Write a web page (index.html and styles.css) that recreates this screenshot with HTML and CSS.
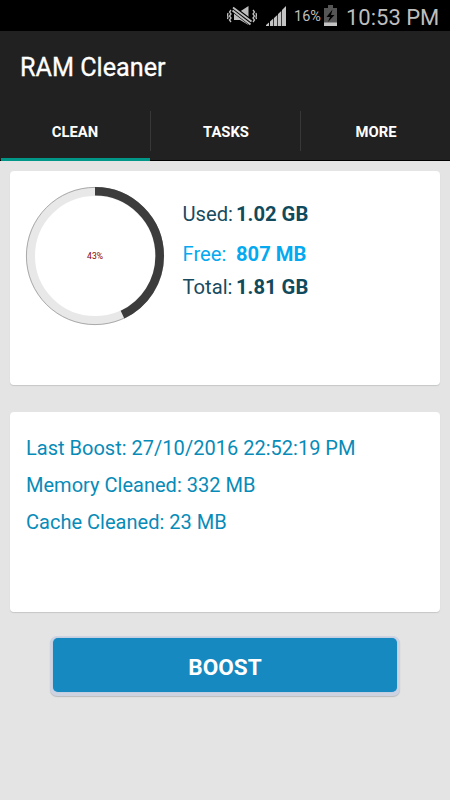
FILE: index.html
```html
<!DOCTYPE html>
<html lang="en">
<head>
<meta charset="utf-8">
<title>RAM Cleaner</title>
<link rel="stylesheet" href="styles.css">
</head>
<body>
<header class="status">
  <svg class="mute" width="30" height="22" viewBox="0 0 30 22">
    <path d="M7 5.500h6L21.500 0v19L13 14H7z" fill="#bebebe"/>
    <path d="M5.500 2.500L24.500 17" stroke="#000" stroke-width="6.500"/>
    <path d="M6 1.500L24.500 15.500M5.500 4.500L23.500 18.500" stroke="#bebebe" stroke-width="1.800"/>
    <path d="M4 4L2.500 6L4 8L2.500 10L4 12L2.500 14L4 16M1 7L0.500 9L1 11L0.500 13M26 4L27.500 6L26 8L27.500 10L26 12L27.500 14L26 16M29 7L29.500 9L29 11L29.500 13" fill="none" stroke="#bebebe" stroke-width="1.300"/>
  </svg>
  <svg class="signal" width="21" height="21" viewBox="0 0 21 21">
    <path d="M0 20v-1l3-2.500V20zM4 20v-4.500l3.300-3V20zM8 20v-8l3.300-3v11zM12 20V8l3.300-3v15zM16 20V4l4-4v20z" fill="#c4c4c4"/>
  </svg>
  <span class="percent">16%</span>
  <svg class="battery" width="13" height="22" viewBox="0 0 13 22">
    <path d="M4 0h5v3h4v18H0V3h4z" fill="#555"/>
    <path d="M0 17.500h13V21H0z" fill="#c4c4c4"/>
    <path d="M8.500 4.500L2.500 12h3.500L4 17l6.500-7H7z" fill="#000"/>
  </svg>
  <span class="time">10:53 PM</span>
</header>
<div class="appbar">
  <h1>RAM Cleaner</h1>
  <nav class="tabs">
    <a class="tab active">CLEAN</a>
    <a class="tab">TASKS</a>
    <a class="tab">MORE</a>
  </nav>
</div>
<main>
  <section class="card memory">
    <svg class="ring" width="140" height="140" viewBox="0 0 140 140">
      <circle cx="70" cy="70" r="64.500" fill="none" stroke="#e8e8e8" stroke-width="9"/>
      <circle cx="70" cy="70" r="68.600" fill="none" stroke="#999" stroke-width=".8"/>
      <circle cx="70" cy="70" r="64.700" fill="none" stroke="#3c3c3c" stroke-width="8.600" pathLength="100" stroke-dasharray="43 57" transform="rotate(-90 70 70)"/>
      <text x="70" y="73" text-anchor="middle">43%</text>
    </svg>
    <dl class="stats">
      <dt>Used:</dt><dd>1.02 GB</dd>
      <dt class="free">Free:</dt><dd class="free">807 MB</dd>
      <dt class="total">Total:</dt><dd class="total">1.81 GB</dd>
    </dl>
  </section>
  <section class="card history">
    <p>Last Boost: 27/10/2016 22:52:19 PM</p>
    <p>Memory Cleaned: 332 MB</p>
    <p>Cache Cleaned: 23 MB</p>
  </section>
  <button class="boost"><span>BOOST</span></button>
</main>
</body>
</html>
```
FILE: styles.css
```css
* { box-sizing: border-box; }
body {
  margin: 0;
  height: 800px;
  overflow: hidden;
  background: #e4e4e4;
  font-family: Roboto, "Liberation Sans", sans-serif;
}
.status {
  display: flex;
  height: 31px;
  padding-right: 11px;
  justify-content: flex-end;
  background: #000;
  color: #bebebe;
  white-space: nowrap;
}
.mute { margin: 6px 9px 0 0; }
.signal { margin: 6px 7px 0 0; }
.percent { width: 27px; margin-right: 3px; font-size: 14.5px; line-height: 34px; }
.battery { margin: 5px 9px 0 0; }
.time { width: 93px; font-size: 22px; line-height: 35px; }
.appbar { height: 130px; background: #212121; border-bottom: 1px solid #000; color: #fff; }
h1 { margin: 0; height: 72px; padding-left: 20px; font-size: 25.2px; font-weight: 400; line-height: 74px; -webkit-text-stroke: .3px #fff; }
.tabs { display: grid; grid-template-columns: repeat(3, 1fr); height: 58px; }
.tab {
  display: flex;
  height: 58px;
  padding-left: 2px;
  align-items: center;
  justify-content: center;
  font-size: 14.8px;
  font-weight: 700;
  background: linear-gradient(#383838, #383838) 0 8px / 1px 40px no-repeat;
}
.tab.active { background: none; border-bottom: 3px solid #009688; margin-left: 1px; padding: 3px 1px 0 0; }
main { display: flex; flex-direction: column; padding: 10px 10px 0; }
.card { background: #fff; border-radius: 4px; box-shadow: 0 1px 1px #c5c7c7; }
.memory { display: flex; height: 214px; padding: 15px; }
.ring text { font-size: 8.5px; fill: #8b0000; }
.stats { display: grid; grid-template-columns: 53.500px 1fr; grid-template-rows: 40px 40px 26px; height: 106px; margin: 8px 0 0 17.500px; font-size: 20.2px; line-height: 40px; color: #104a5c; white-space: nowrap; }
.stats dt, .stats dd { margin: 0; }
.stats dt { color: #194a60; }
.stats dd { font-weight: 700; }
.stats .free { color: #05a9f0; }
.stats .total { line-height: 26px; }
.history { height: 200px; margin-top: 27px; padding: 18px 16px; color: #078bb8; font-size: 20.05px; line-height: 37px; white-space: nowrap; }
.history p { margin: 0; }
.boost { display: flex; width: 350px; height: 60px; margin: 24px auto 0; padding: 2px 3px 4px; border: 0; border-radius: 7px; background: #ced3e2; box-shadow: 0 1px 1px #b9bbbd; font: 700 22.6px Roboto, "Liberation Sans", sans-serif; color: #fff; }
.boost span { display: flex; flex: 1; height: 54px; align-items: center; justify-content: center; padding-top: 4px; border-radius: 5px; background: #1589c0; box-shadow: 0 0 1px #6caede; }
```
